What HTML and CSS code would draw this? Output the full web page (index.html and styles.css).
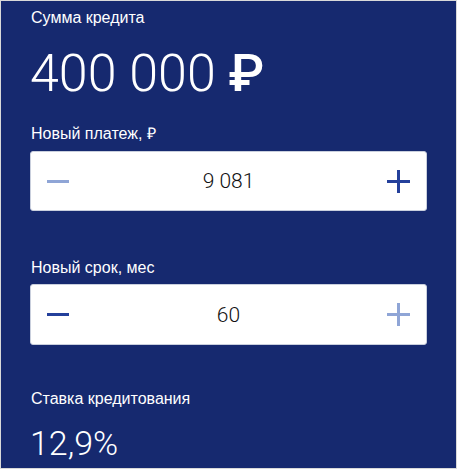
FILE: index.html
```html
<!DOCTYPE html>
<html lang="ru">
<head>
  <meta charset="UTF-8">
  <meta name="viewport" content="width=device-width, initial-scale=1">
  <title>Кредит</title>
  <link rel="stylesheet" href="styles.css">
</head>
<body>

<div class="credit-panel">
  <div class="label">Сумма кредита</div>
  <div class="amount">400 000 <span class="currency">₽</span></div>

  <div class="label label-payment">Новый платеж, ₽</div>
  <div class="stepper">
    <button class="step-btn disabled" aria-label="Уменьшить">
      <svg width="23" height="23" viewBox="0 0 23 23"><rect x="0" y="10" width="22" height="3" fill="currentColor"/></svg>
    </button>
    <span class="step-value">9 081</span>
    <button class="step-btn" aria-label="Увеличить">
      <svg width="23" height="23" viewBox="0 0 23 23"><rect x="0" y="10" width="23" height="3" fill="currentColor"/><rect x="10" y="0" width="3" height="23" fill="currentColor"/></svg>
    </button>
  </div>

  <div class="label label-term">Новый срок, мес</div>
  <div class="stepper stepper-term">
    <button class="step-btn" aria-label="Уменьшить">
      <svg width="23" height="23" viewBox="0 0 23 23"><rect x="0" y="10" width="22" height="3" fill="currentColor"/></svg>
    </button>
    <span class="step-value">60</span>
    <button class="step-btn disabled" aria-label="Увеличить">
      <svg width="23" height="23" viewBox="0 0 23 23"><rect x="0" y="10" width="23" height="3" fill="currentColor"/><rect x="10" y="0" width="3" height="23" fill="currentColor"/></svg>
    </button>
  </div>

  <div class="label label-rate">Ставка кредитования</div>
  <div class="rate">12,9%</div>
</div>

</body>
</html>
```

FILE: styles.css
```css
body {
  margin: 0;
  padding: 0;
  background-color: #d9d9d9;
}

.credit-panel {
  box-sizing: border-box;
  width: 455px;
  height: 467px;
  margin: 1px;
  padding: 8px 29px 0 29px;
  background-color: #16296f;
  color: #fff;
  overflow: hidden;
}

.label {
  font-family: "Liberation Sans", Arial, sans-serif;
  font-size: 16px;
  line-height: 18px;
  padding-left: 1px;
}

.amount {
  margin-top: 17px;
  font-family: Roboto, sans-serif;
  font-weight: 300;
  font-size: 52px;
  line-height: 60px;
}

.amount .currency {
  font-weight: 500;
}

.label-payment {
  margin-top: 21px;
}

.stepper {
  box-sizing: border-box;
  display: flex;
  align-items: center;
  justify-content: space-between;
  height: 60px;
  margin-top: 8px;
  padding: 0 16px;
  background-color: #fff;
  border: 1px solid #c9cfdd;
  border-radius: 3px;
}

.stepper-term {
  height: 61px;
  margin-top: 7px;
}

.step-btn {
  display: flex;
  padding: 0;
  border: none;
  background: none;
  color: #24409b;
  cursor: pointer;
}

.step-btn.disabled {
  color: #8fa5d6;
}

.step-value {
  font-family: Roboto, sans-serif;
  font-weight: 300;
  font-size: 21px;
  color: #111;
}

.label-term {
  margin-top: 48px;
}

.label-rate {
  margin-top: 45px;
}

.rate {
  margin-top: 15px;
  font-family: Roboto, sans-serif;
  font-weight: 300;
  font-size: 34px;
  line-height: 40px;
}
```
